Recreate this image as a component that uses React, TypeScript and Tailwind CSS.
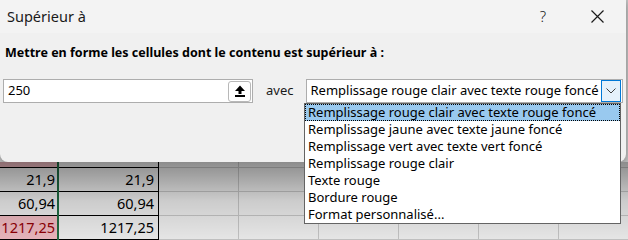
import React from "react";

const options = [
  "Remplissage rouge clair avec texte rouge foncé",
  "Remplissage jaune avec texte jaune foncé",
  "Remplissage vert avec texte vert foncé",
  "Remplissage rouge clair",
  "Texte rouge",
  "Bordure rouge",
  "Format personnalisé...",
];

// rows of the sheet behind the dialog (first one is mostly hidden)
const rows = [
  { a: "1337", b: "1337", pink: true },
  { a: "21,9", b: "21,9", pink: false },
  { a: "60,94", b: "60,94", pink: false },
  { a: "1217,25", b: "1217,25", pink: true },
];

const UploadIcon = () => (
  <svg width="12" height="12" viewBox="0 0 12 12">
    <path d="M6 0.5 L11 6 L7.5 6 L7.5 9 L4.5 9 L4.5 6 L1 6 Z" fill="#000" />
    <rect x="1" y="10" width="10" height="2" fill="#000" />
  </svg>
);

const Chevron = () => (
  <svg width="10" height="6" viewBox="0 0 10 6">
    <path d="M0.5 0.5 L5 5 L9.5 0.5" fill="none" stroke="#404040" strokeWidth="1" />
  </svg>
);

const CloseIcon = () => (
  <svg width="13" height="13" viewBox="0 0 13 13">
    <path d="M0.5 0.5 L12.5 12.5 M12.5 0.5 L0.5 12.5" stroke="#1a1a1a" strokeWidth="1.2" />
  </svg>
);

export default function App() {
  return (
    <div className="relative w-[628px] h-[240px] overflow-hidden bg-[#c4c4c4] font-['Noto_Sans',sans-serif] text-black">
      {/* dialog */}
      <div className="w-[626px] h-[162px] rounded-b-[8px] bg-[#f0f0f0] shadow-[0_2px_8px_rgba(0,0,0,0.35)] flex flex-col">
        <div className="h-[33px] bg-[#f3f3f3] flex items-center pl-[7px] text-[14.5px] text-[#1a1a1a]">
          <span className="flex-1">Supérieur à</span>
          <span className="w-[20px] text-center text-[15px] font-light mr-[38px]">?</span>
          <span className="mr-[22px] flex items-center">
            <CloseIcon />
          </span>
        </div>
        <div className="pl-[5px] pt-[11px] text-[12.5px] font-bold leading-[17px]">
          Mettre en forme les cellules dont le contenu est supérieur à :
        </div>
        <div className="flex items-center mt-[18px] pl-[3px]">
          <div className="w-[250px] h-[24px] bg-white border border-[#adadad] flex items-center pl-[4px] pr-[1px]">
            <span className="flex-1 text-[13px]">250</span>
            <div className="w-[23px] h-[21px] border border-[#b8b8b8] rounded-[3px] bg-white flex items-center justify-center">
              <UploadIcon />
            </div>
          </div>
          <span className="ml-[13px] text-[13px] text-[#1a1a1a]">avec</span>
          <div className="ml-[13px] w-[317px] h-[24px] bg-white border border-[#adadad] flex items-center pl-[3px] pr-[1px]">
            <span className="flex-1 text-[13px]">Remplissage rouge clair avec texte rouge foncé</span>
            <div className="w-[20px] h-[22px] border border-[#0078d7] bg-[#e5f1fb] flex items-center justify-center">
              <Chevron />
            </div>
          </div>
        </div>
      </div>

      {/* sheet behind */}
      <div className="relative h-[78px] overflow-hidden bg-white text-[14.5px]">
        <div className="-mt-[18px]">
          {rows.map((r, i) => (
            <div key={i} className="flex h-[24px]">
              <div
                className={`w-[57px] shrink-0 border-b border-black flex items-center justify-end pr-[2px] whitespace-nowrap ${
                  r.pink ? "bg-[#ffc7ce] text-[#9c0006]" : "bg-white"
                }`}
              >
                {r.a}
              </div>
              <div className="w-[2px] shrink-0 bg-[#217346]" />
              <div className="w-[100px] shrink-0 border-b border-r border-black flex items-center justify-end pr-[4px]">
                {r.b}
              </div>
              {[0, 1, 2, 3, 4, 5].map((c) => (
                <div key={c} className="w-[80px] shrink-0 border-b border-r border-[#d4d4d4]" />
              ))}
            </div>
          ))}
        </div>
        {/* dialog shadow cast over the sheet */}
        <div className="pointer-events-none absolute inset-0 bg-gradient-to-b from-black/45 via-black/20 to-black/10" />
      </div>

      {/* open dropdown list */}
      <div className="absolute left-[304px] top-[103px] w-[317px] bg-white border border-[#646464] text-[13px] leading-[17px]">
        {options.map((o, i) => (
          <div
            key={o}
            className={`h-[17px] pl-[3px] whitespace-nowrap ${
              i === 0 ? "bg-[#99c9ef] outline outline-1 outline-dotted outline-offset-[-1px] outline-black" : ""
            }`}
          >
            {o}
          </div>
        ))}
      </div>
    </div>
  );
}
